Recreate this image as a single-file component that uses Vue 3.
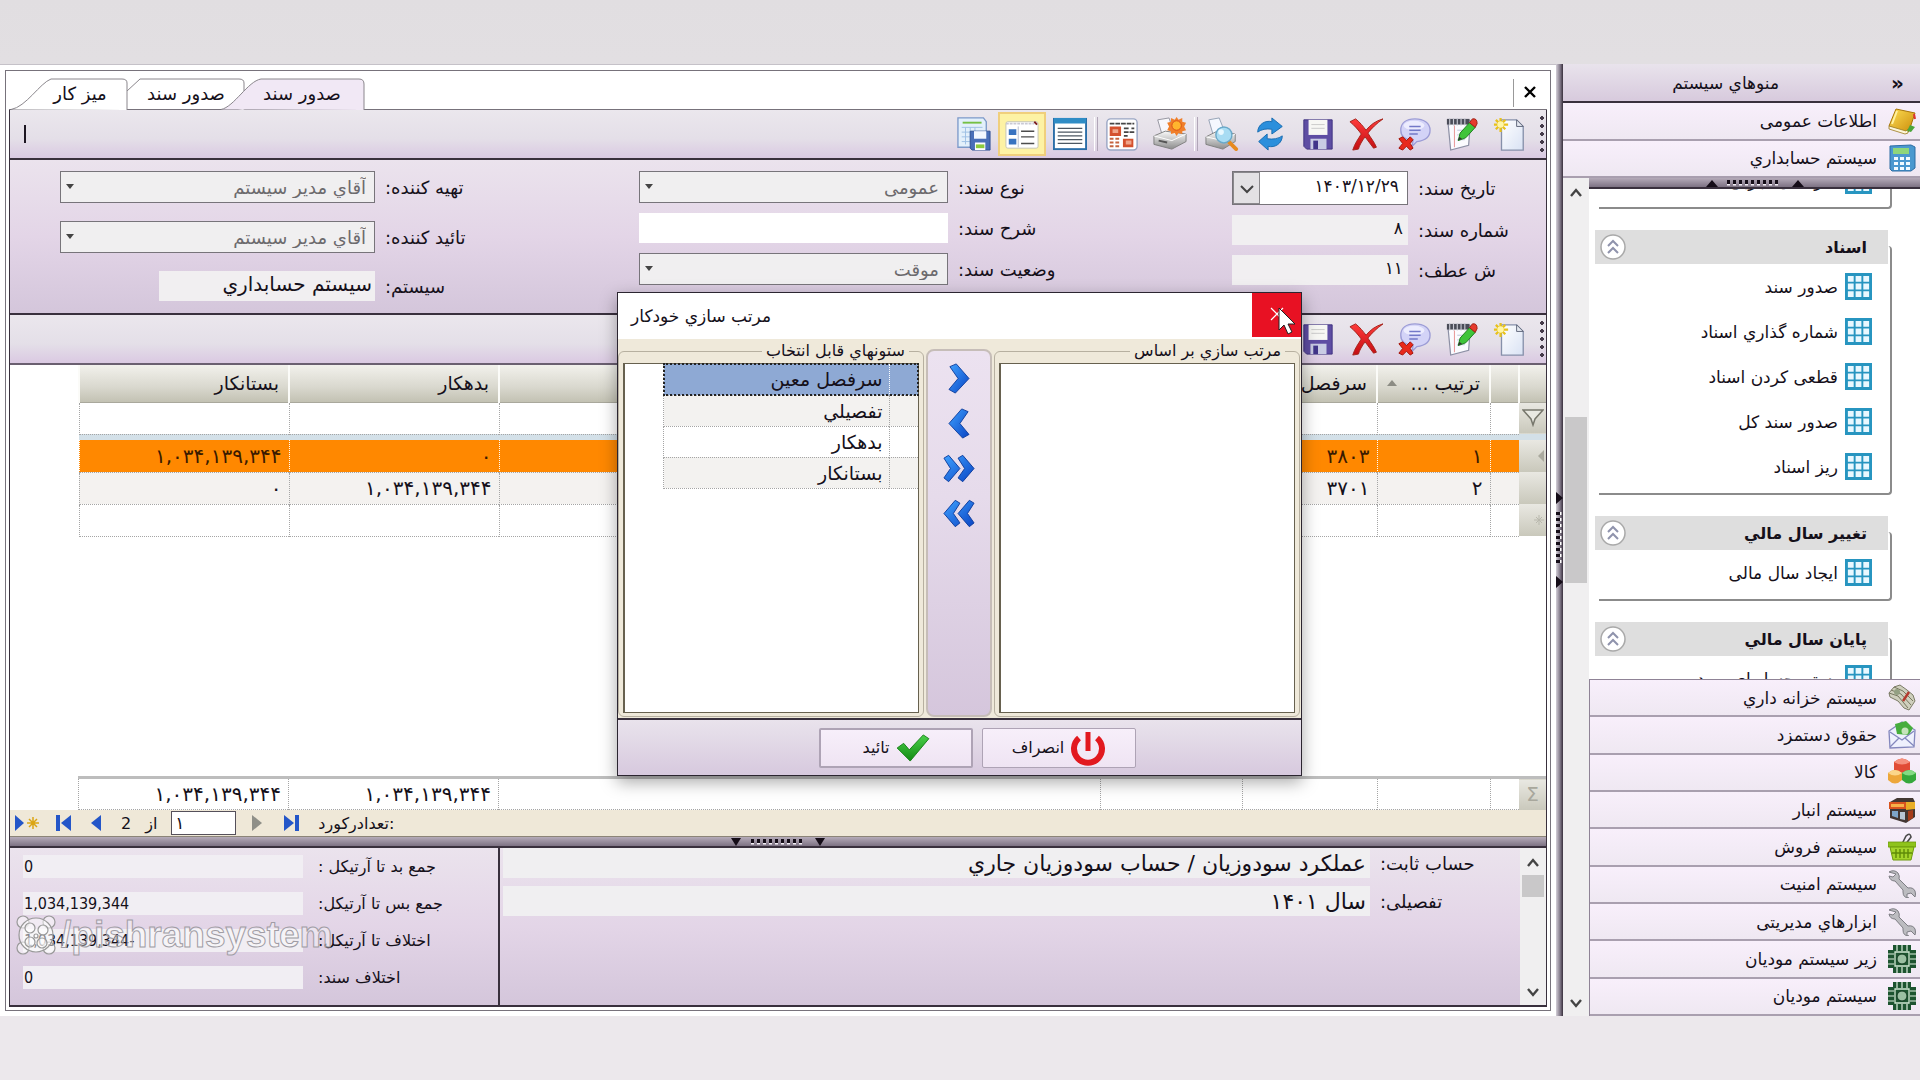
<template>
  <div class="page">
    <svg class="sprite" aria-hidden="true">
      <defs>
        <linearGradient id="g-blue" x1="0" y1="0" x2="1" y2="1">
          <stop offset="0" stop-color="#3fa2ff" />
          <stop offset="1" stop-color="#0a44c4" />
        </linearGradient>
        <linearGradient id="g-paper" x1="0" y1="0" x2="1" y2="1">
          <stop offset="0" stop-color="#ffffff" />
          <stop offset="1" stop-color="#d9e2f4" />
        </linearGradient>
        <linearGradient id="g-gold" x1="0" y1="0" x2="1" y2="1">
          <stop offset="0" stop-color="#ffdf55" />
          <stop offset="1" stop-color="#c98a08" />
        </linearGradient>
        <linearGradient id="g-metal" x1="0" y1="0" x2="0" y2="1">
          <stop offset="0" stop-color="#fafafa" />
          <stop offset="1" stop-color="#8c8c8c" />
        </linearGradient>
        <linearGradient id="g-red" x1="0" y1="0" x2="0" y2="1">
          <stop offset="0" stop-color="#ff3b3b" />
          <stop offset="1" stop-color="#c40d12" />
        </linearGradient>
        <linearGradient id="g-green" x1="0" y1="0" x2="0" y2="1">
          <stop offset="0" stop-color="#4bd04b" />
          <stop offset="1" stop-color="#128a12" />
        </linearGradient>
      </defs>

      <symbol id="i-new" viewBox="0 0 36 36">
        <path d="M9 3h16l7 7v25H9z" fill="url(#g-paper)" stroke="#8690aa" stroke-width="1.4" />
        <path d="M25 3v7h7z" fill="#e6eaf2" stroke="#5d6478" />
        <path d="M8 1v15M1 8h15M3 3l10 10M13 3L3 13" stroke="#e8c11b" stroke-width="2.4" />
        <circle cx="8" cy="8" r="3.4" fill="#fff6a6" />
      </symbol>
      <symbol id="i-edit" viewBox="0 0 36 36">
        <path d="M3 4h24l-2 26-19 5z" fill="#fbfbff" stroke="#8d90a5" stroke-width="1.3" />
        <path d="M2 2h24v6H2z" fill="#4a4c58" />
        <path d="M5 1v8M9 1v8M13 1v8M17 1v8M21 1v8" stroke="#c9cad4" stroke-width="1.2" />
        <path d="M10 9v23" stroke="#e58f8f" />
        <path d="M13 14h10M13 19h8M13 24h8" stroke="#b9bfd6" />
        <path d="M14 25l2-8 10-11 6 5-10 11z" fill="#3fc43a" stroke="#1c7c1c" />
        <path d="M26 6l3-4q5-1 5 5l-2 4z" fill="#e63a2c" stroke="#9b1d12" />
        <path d="M14 25l1-4 3 2z" fill="#333" />
      </symbol>
      <symbol id="i-comment" viewBox="0 0 36 36">
        <path d="M19 2c9 0 16 4 16 12 0 7-6 11-14 12l-5 5 1-6C8 24 4 20 4 14 4 6 10 2 19 2z" fill="#d3d3f7" stroke="#9c9cd6" stroke-width="1.4" />
        <ellipse cx="18" cy="9" rx="11" ry="5" fill="#f2f2ff" opacity=".8" />
        <path d="M13 10h12M13 14h12M13 18h9" stroke="#7378c8" stroke-width="1.6" />
        <path d="M2 23l4-2 4 4 4-4 3 3-3 4 3 5-3 2-4-4-4 4-4-2 4-5z" fill="#e8291c" stroke="#a11208" />
      </symbol>
      <symbol id="i-delete" viewBox="0 0 36 36">
        <path d="M1 5l6-3c5 4 8 8 11 12C22 9 28 4 36 2c-7 5-12 10-16 15 3 5 7 10 9 15l-3 1c-3-4-6-8-9-12-3 4-6 9-7 13l-6 1c2-7 6-12 9-17C10 14 6 9 1 5z" fill="url(#g-red)" stroke="#a3231b" />
      </symbol>
      <symbol id="i-save" viewBox="0 0 36 36">
        <path d="M3 3h30v31H6l-3-3z" fill="#5e4da3" stroke="#3f3180" />
        <path d="M8 3h20v16H8z" fill="#f7f7f4" />
        <path d="M11 8h14M11 12h14" stroke="#c9c9c9" />
        <path d="M10 23h17v11H10z" fill="#c9cce4" />
        <path d="M13 25h5v9h-5z" fill="#41368a" />
      </symbol>
      <symbol id="i-refresh" viewBox="0 0 36 36">
        <path d="M5 16C5 8 13 3 20 5V1l11 9-11 8v-5c-6-1-11 0-15 3z" fill="#2b8fdc" stroke="#176bb0" />
        <path d="M31 20c0 8-8 13-15 11v4L6 26l9-8v5c6 1 12 0 16-3z" fill="#2b8fdc" stroke="#176bb0" />
      </symbol>
      <symbol id="i-preview" viewBox="0 0 36 36">
        <path d="M4 3l11-2 6 15-12 4z" fill="#f4f8ff" stroke="#94a0b4" />
        <path d="M1 21l12-6 19 3v8l-13 8-18-5z" fill="url(#g-metal)" stroke="#808080" />
        <path d="M1 21l18 4 13-7" fill="none" stroke="#fff" />
        <path d="M25 26l8 8" stroke="#e78a1e" stroke-width="4" stroke-linecap="round" />
        <circle cx="20" cy="19" r="8.500" fill="#a8dcf3" stroke="#6aa9c9" stroke-width="1.5" />
        <circle cx="17" cy="16" r="3" fill="#e8f8ff" />
      </symbol>
      <symbol id="i-printer" viewBox="0 0 36 36">
        <path d="M5 3l12-2 5 15-12 4z" fill="#f8f8fc" stroke="#94949e" />
        <path d="M1 20l12-5 22 3v8l-15 8-19-5z" fill="url(#g-metal)" stroke="#7e7e7e" />
        <path d="M1 20l19 5 15-7" fill="none" stroke="#fff" />
        <path d="M6 25l9 2" stroke="#555" stroke-width="2" />
        <path d="M25 0l2 3 4-2v4l4 1-2 4 2 4-4 1v3l-4-1-2 3-2-3-4 1v-3l-4-1 2-4-2-4 4-1V1l4 2z" fill="#f07f2a" />
        <circle cx="25" cy="9" r="5" fill="#ffb52e" stroke="#d94e17" />
      </symbol>
      <symbol id="i-news" viewBox="0 0 36 36">
        <rect x="2" y="2" width="32" height="33" rx="4" fill="#fff" stroke="#9aa6c4" stroke-width="1.5" />
        <path d="M5 7h26M20 12h5M28 12h3M20 16h11M20 20h4" stroke="#454545" stroke-width="2" stroke-dasharray="5 1" />
        <path d="M5 10h12v10H5zM19 23h11v9H19z" fill="#d4512e" />
        <path d="M8 13h6v4H8zM22 25h6v4h-6z" fill="#efa58a" />
        <path d="M5 23h11M5 27h12M5 31h11" stroke="#c5633f" stroke-width="2" stroke-dasharray="4 2" />
      </symbol>
      <symbol id="i-list" viewBox="0 0 36 36">
        <rect x="1" y="2" width="34" height="32" fill="#fff" stroke="#2b6ea8" stroke-width="2" />
        <path d="M1 1h34v6H1z" fill="#2f8cc5" />
        <path d="M5 12h26M5 16h26M5 20h26M5 24h26M5 28h26" stroke="#4c5762" stroke-width="1.4" />
      </symbol>
      <symbol id="i-card" viewBox="0 0 36 36">
        <rect x="1" y="5" width="34" height="28" rx="2" fill="#fff" stroke="#c4c4b4" />
        <path d="M1 7h30" stroke="#c9c9d4" stroke-width="2" stroke-dasharray="3 1" />
        <path d="M31 5l3 3" stroke="#7d1f1f" stroke-width="2" />
        <path d="M4 13h8v6H4zM4 23h8v6H4z" fill="#3873c0" />
        <path d="M14 10v22" stroke="#b6bccb" />
        <path d="M17 15h14M17 21h14M17 28h14" stroke="#4d4d4d" stroke-width="1.500" />
      </symbol>
      <symbol id="i-savelist" viewBox="0 0 36 36">
        <path d="M1 1h27l3 4v27H1z" fill="#e3f0fb" stroke="#7c99c9" stroke-width="1.400" />
        <path d="M6 6h20" stroke="#75c044" stroke-width="2" />
        <path d="M5 11h22M5 16h22M5 21h22M5 26h22M9 11v18M14 11v18M19 11v18" stroke="#9dbfe4" />
        <path d="M14 15h21v20H16l-2-2z" fill="#4a6fb8" stroke="#2e4f93" />
        <path d="M18 15h13v8H18z" fill="#f3f7ff" />
        <path d="M19 27h11v8H19z" fill="#fff" />
        <path d="M20 29h9v4h-9z" fill="#8ccb3e" />
      </symbol>

      <symbol id="i-grid" viewBox="0 0 28 28">
        <path d="M0 0h28v28H0z" fill="#2795c0" />
        <path d="M3 3h6v6H3zM11 3h6v6h-6zM19 3h6v6h-6zM3 11h6v6H3zM11 11h6v6h-6zM19 11h6v6h-6zM3 19h6v6H3zM11 19h6v6h-6zM19 19h6v6h-6z" fill="#e9f8ff" />
      </symbol>
      <symbol id="i-book" viewBox="0 0 28 28">
        <path d="M8 2l19 4-6 18-3 2L1 19z" fill="url(#g-gold)" stroke="#a87508" />
        <path d="M1 19l17 5 2-2v4l-3 1L1 22z" fill="#fdf6d8" stroke="#9a7a1e" stroke-width=".8" />
        <path d="M22 18l5 2-4 5-4-1z" fill="#4ba63a" />
        <path d="M9 4L4 17" stroke="#fff1a0" stroke-width="2" />
        <path d="M26 7l1 5" stroke="#d33" stroke-width="2" />
      </symbol>
      <symbol id="i-calc" viewBox="0 0 28 28">
        <path d="M2 2l21-1 4 2v21l-4 3H4l-2-2z" fill="#4b98cf" stroke="#2d6da3" />
        <path d="M5 4h16v6H5z" fill="#8fd67a" />
        <path d="M6 13h4v3H6zM12 13h4v3h-4zM18 13h4v3h-4zM6 18h4v3H6zM12 18h4v3h-4zM18 18h4v3h-4zM6 23h4v3H6zM12 23h4v3h-4zM18 23h4v3h-4z" fill="#f3fbff" />
      </symbol>
      <symbol id="i-money" viewBox="0 0 28 28">
        <path d="M1 9l5-6 6-2 7 5 6 5 2 6-6 9-5-2-6-7-8-4z" fill="#cfcfbd" stroke="#7b7b66" />
        <path d="M1 9l9 3 10 12M3 6l10 4 10 11M6 3l9 4 10 10" fill="none" stroke="#77775f" />
        <circle cx="9" cy="8" r="3" fill="#93a082" />
        <path d="M21 8l-6 9" stroke="#b43a2e" stroke-width="2.500" />
      </symbol>
      <symbol id="i-mail" viewBox="0 0 28 28">
        <path d="M1 10L14 1l13 8-1 17-24 1z" fill="#eef0fd" stroke="#8387bd" stroke-width="1.300" />
        <path d="M7 3l11-3 7 7-4 7-12-1z" fill="#46ad3d" />
        <circle cx="17" cy="10" r="3.500" fill="#c5e3bb" />
        <path d="M2 11l12 8 12-9M2 26l9-9M26 25l-9-8" fill="none" stroke="#8387bd" stroke-width="1.300" />
      </symbol>
      <symbol id="i-cubes" viewBox="0 0 28 28">
        <path d="M6 4q8-7 16 0v8q-8 6-16 0z" fill="#e14b35" />
        <path d="M6 4q8-7 16 0-8 5-16 0z" fill="#f5917e" />
        <path d="M0 15q7-6 14 0v7q-7 7-14 0z" fill="#eda73a" />
        <path d="M0 15q7-6 14 0-7 5-14 0z" fill="#fbd68b" />
        <path d="M14 15q7-6 14 0v7q-7 7-14 0z" fill="#35a83b" />
        <path d="M14 15q7-6 14 0-7 5-14 0z" fill="#84da83" />
      </symbol>
      <symbol id="i-store" viewBox="0 0 28 28">
        <path d="M2 6l7-4h16l2 4v15l-9 6L2 22z" fill="#433733" />
        <path d="M1 6h17v7H1z" fill="#d9541f" />
        <path d="M18 6h9v7l-9 1z" fill="#e9ad26" />
        <path d="M3 8h13v3H3z" fill="#f7b14a" />
        <path d="M4 15h6v7l-6-2z" fill="#7da5c9" />
        <path d="M12 16h5v8l-5-1z" fill="#b8c5d4" />
        <path d="M20 15l5-1v8l-5 3z" fill="#a63c1a" />
      </symbol>
      <symbol id="i-basket" viewBox="0 0 28 28">
        <path d="M14 11l4-8q4-4 5 1l-6 8" fill="none" stroke="#4b4b4b" stroke-width="1.600" />
        <path d="M0 9h28v5H0z" fill="#8fc31c" stroke="#6c9a0c" stroke-width=".8" />
        <path d="M2 14h24l-3 13H5z" fill="#a4d42b" stroke="#6c9a0c" />
        <path d="M8 16v9M12 16v9M16 16v9M20 16v9M4 20h20" stroke="#5f8a08" stroke-width="1.400" />
      </symbol>
      <symbol id="i-wrench" viewBox="0 0 28 28">
        <path d="M1 2q5-3 9 1 2 3 1 6l9 9q5-1 7 3 1 3 0 6l-4-4-4 1v4l2 0q-6 0-6-6l0-2-8-9q-5 0-6-5l4 1 3-3z" fill="#bcbcc0" stroke="#7e7e84" />
      </symbol>
      <symbol id="i-tax" viewBox="0 0 28 28">
        <path d="M5 0h18v5h5v18h-5v5H5v-5H0V5h5z" fill="#1d5430" />
        <path d="M9 0v6M14 0v6M19 0v6M9 22v6M14 22v6M19 22v6M0 9h6M0 14h6M0 19h6M22 9h6M22 14h6M22 19h6" stroke="#dff0e0" stroke-width="1.200" />
        <path d="M7 7h14v14H7z" fill="none" stroke="#cfe6d2" stroke-width="1.300" />
        <circle cx="14" cy="14" r="5" fill="#9bbfa2" stroke="#123a20" />
      </symbol>

      <symbol id="i-right" viewBox="0 0 26 34">
        <path d="M3 4l7-3 14 16L9 33l-7-4 10-12z" fill="url(#g-blue)" stroke="#0d3c9c" />
      </symbol>
      <symbol id="i-left" viewBox="0 0 26 34">
        <path d="M23 4l-7-3L2 17l15 16 7-4-10-12z" fill="url(#g-blue)" stroke="#0d3c9c" />
      </symbol>
      <symbol id="i-right2" viewBox="0 0 34 30">
        <path d="M1 4l5-3 12 14L6 29l-5-4 7-10zM16 4l5-3 12 14-12 14-5-4 7-10z" fill="url(#g-blue)" stroke="#0d3c9c" />
      </symbol>
      <symbol id="i-left2" viewBox="0 0 34 30">
        <path d="M33 4l-5-3-12 14 12 14 5-4-7-10zM18 4l-5-3L1 15l12 14 5-4-7-10z" fill="url(#g-blue)" stroke="#0d3c9c" />
      </symbol>
      <symbol id="i-power" viewBox="0 0 36 36">
        <path d="M9 8a14 14 0 1 0 18 0" fill="none" stroke="#e2191f" stroke-width="6" />
        <path d="M18 2v19" stroke="#e2191f" stroke-width="5" />
      </symbol>
      <symbol id="i-check" viewBox="0 0 36 30">
        <path d="M1 15l7-5 6 7L29 1l6 4L15 29z" fill="url(#g-green)" stroke="#178017" />
      </symbol>
    </svg>

    <div class="app">
      <main class="workspace">
        <div class="frame">
          <nav class="tabs">
            <svg class="tab-lines" width="370" height="39" viewBox="0 0 370 39" aria-hidden="true">
              <path d="M2 38.500C17 36 31 12 42 8h71q5 0 5 4v27" fill="#fff" stroke="#8a868c" />
              <path d="M118 20L131 8h99q5 0 5 4v27" fill="#fff" stroke="#8a868c" />
              <path d="M212 38.500C225 36 239 10 252 8h98q5 0 5 5v26" fill="#f1e8f5" stroke="#8a868c" />
            </svg>
            <button v-for="tab in tabs" :key="tab.id" class="tab" :class="tab.id">{{ tab.title }}</button>
            <button class="tab-close" aria-label="بستن">
              <svg width="14" height="14" viewBox="0 0 14 14"><path d="M2 2l10 10M12 2L2 12" stroke="#000" stroke-width="2.400" /></svg>
            </button>
          </nav>

          <div class="content">
            <div class="toolbar">
              <span class="grip"></span>
              <template v-for="(name, i) in mainTools" :key="i">
                <span v-if="name === '|'" class="tool-sep"></span>
                <button v-else class="tool" :class="{ active: name === 'card' }" :aria-label="name">
                  <svg width="34" height="34"><use :href="'#i-' + name" /></svg>
                </button>
              </template>
              <span class="tool-caret"></span>
            </div>

            <form class="voucher" @submit.prevent>
              <div class="fields fields-a">
                <div class="field">
                  <span class="combo">
                    <select id="maker" disabled><option>آقاي مدیر سیستم</option></select>
                    <svg class="combo-arrow" width="8" height="5"><path d="M0 0h8L4 5z" fill="#444" /></svg>
                  </span>
                  <label for="maker">تهیه کننده:</label>
                </div>
                <div class="field">
                  <span class="combo">
                    <select id="approver" disabled><option>آقاي مدیر سیستم</option></select>
                    <svg class="combo-arrow" width="8" height="5"><path d="M0 0h8L4 5z" fill="#444" /></svg>
                  </span>
                  <label for="approver">تائید کننده:</label>
                </div>
                <div class="field">
                  <input id="system" class="plain short" value="سیستم حسابداري" readonly />
                  <label for="system">سیستم:</label>
                </div>
              </div>
              <div class="fields fields-b">
                <div class="field">
                  <span class="combo">
                    <select id="kind" disabled><option>عمومی</option></select>
                    <svg class="combo-arrow" width="8" height="5"><path d="M0 0h8L4 5z" fill="#444" /></svg>
                  </span>
                  <label for="kind">نوع سند:</label>
                </div>
                <div class="field">
                  <input id="desc" class="plain editable" value="" />
                  <label for="desc">شرح سند:</label>
                </div>
                <div class="field">
                  <span class="combo">
                    <select id="state" disabled><option>موقت</option></select>
                    <svg class="combo-arrow" width="8" height="5"><path d="M0 0h8L4 5z" fill="#444" /></svg>
                  </span>
                  <label for="state">وضعیت سند:</label>
                </div>
              </div>
              <div class="fields fields-c">
                <div class="field">
                  <span class="date">
                    <button type="button" class="date-drop" aria-label="تقویم">
                      <svg width="14" height="9" viewBox="0 0 14 9"><path d="M1 1l6 6 6-6" fill="none" stroke="#444" stroke-width="2" /></svg>
                    </button>
                    <input id="date" value="۱۴۰۳/۱۲/۲۹" />
                  </span>
                  <label for="date">تاریخ سند:</label>
                </div>
                <div class="field">
                  <input id="number" class="plain" value="۸" readonly />
                  <label for="number">شماره سند:</label>
                </div>
                <div class="field">
                  <input id="ref" class="plain" value="۱۱" readonly />
                  <label for="ref">ش عطف:</label>
                </div>
              </div>
            </form>

            <div class="toolbar">
              <span class="grip"></span>
              <button v-for="name in rowTools" :key="name" class="tool" :aria-label="name">
                <svg width="34" height="34"><use :href="'#i-' + name" /></svg>
              </button>
            </div>

            <div class="grid">
              <table class="articles">
                <colgroup>
                  <col v-for="(w, i) in colWidths" :key="i" :class="'w' + w" />
                </colgroup>
                <thead>
                  <tr>
                    <th></th>
                    <th></th>
                    <th><span class="sorted">ترتیب ...<svg width="10" height="6"><path d="M0 6h10L5 0z" fill="#8c8c84" /></svg></span></th>
                    <th>سرفصل</th>
                    <th></th>
                    <th></th>
                    <th>بدهکار</th>
                    <th>بستانکار</th>
                  </tr>
                </thead>
                <tbody>
                  <tr class="filter">
                    <td class="handle"><svg width="22" height="18" viewBox="0 0 22 18"><path d="M1 1h20l-8 9-2 6-2-6z" fill="#e9e9e2" stroke="#77776c" stroke-width="1.500" /></svg></td>
                    <td v-for="n in 7" :key="n"></td>
                  </tr>
                  <tr class="band"><td colspan="8"></td></tr>
                  <tr v-for="row in articles" :key="row.order" :class="row.order === '۱' ? 'current' : 'alt'">
                    <td class="handle"><svg v-if="row.order === '۱'" width="6" height="12"><path d="M6 0v12L0 6z" fill="#aaa99e" /></svg></td>
                    <td></td>
                    <td>{{ row.order }}</td>
                    <td>{{ row.code }}</td>
                    <td></td>
                    <td></td>
                    <td>{{ row.debit }}</td>
                    <td>{{ row.credit }}</td>
                  </tr>
                  <tr>
                    <td class="handle">
                      <svg width="10" height="10"><path d="M5 0v10M0 5h10M2 2l6 6M8 2L2 8" stroke="#b9b8ad" /></svg>
                    </td>
                    <td v-for="n in 7" :key="n"></td>
                  </tr>
                </tbody>
              </table>

              <table class="articles totals">
                <colgroup>
                  <col v-for="(w, i) in colWidths" :key="i" :class="'w' + w" />
                </colgroup>
                <tbody>
                  <tr>
                    <td class="handle sigma">Σ</td>
                    <td></td>
                    <td></td>
                    <td></td>
                    <td></td>
                    <td></td>
                    <td>۱,۰۳۴,۱۳۹,۳۴۴</td>
                    <td>۱,۰۳۴,۱۳۹,۳۴۴</td>
                  </tr>
                </tbody>
              </table>
            </div>

            <div class="navigator">
              <button aria-label="رکورد جدید">
                <svg width="24" height="16"><path d="M0 0v16l9-8z" fill="#2456c8" /><path d="M18 2v12M12 8h12M14 4l8 8M22 4l-8 8" stroke="#dba514" stroke-width="1.500" /></svg>
              </button>
              <button aria-label="اولین">
                <svg width="16" height="16"><path d="M1 0h4v16H1zM16 0v16L6 8z" fill="#2456c8" /></svg>
              </button>
              <button aria-label="قبلی">
                <svg width="10" height="16"><path d="M10 0v16L0 8z" fill="#2456c8" /></svg>
              </button>
              <span>2</span>
              <label for="record">از</label>
              <input id="record" value="۱" />
              <button aria-label="بعدی">
                <svg width="10" height="16"><path d="M0 0v16l10-8z" fill="#8f8f88" /></svg>
              </button>
              <button aria-label="آخرین">
                <svg width="16" height="16"><path d="M11 0h4v16h-4zM0 0v16l10-8z" fill="#2456c8" /></svg>
              </button>
              <span class="count">تعدادرکورد:</span>
            </div>

            <div class="splitter">
              <svg width="94" height="10" viewBox="0 0 94 10">
                <path d="M0 1h10L5 9zM84 1h10l-5 8z" fill="#150d18" />
                <path d="M20 5h54" stroke="#f4eff6" stroke-width="5" stroke-dasharray="3 3" />
                <path d="M20 4h54" stroke="#150d18" stroke-width="4" stroke-dasharray="3 3" />
              </svg>
            </div>

            <section class="details">
              <div class="sums">
                <div v-for="sum in sums" :key="sum.id" class="sum">
                  <input :id="sum.id" :value="sum.value" readonly />
                  <label :for="sum.id">{{ sum.label }}</label>
                </div>
              </div>
              <div class="account">
                <div class="account-row">
                  <input id="fixed" value="عملکرد سودوزیان / حساب سودوزیان جاري" readonly />
                  <label for="fixed">حساب ثابت:</label>
                </div>
                <div class="account-row">
                  <input id="detail" value="سال ۱۴۰۱" readonly />
                  <label for="detail">تفصیلی:</label>
                </div>
              </div>
              <div class="scrollbar">
                <svg width="14" height="9" viewBox="0 0 14 9"><path d="M2 8l5-6 5 6" fill="none" stroke="#444" stroke-width="2.400" /></svg>
                <span class="thumb small"></span>
                <svg class="down" width="14" height="9" viewBox="0 0 14 9"><path d="M2 1l5 6 5-6" fill="none" stroke="#444" stroke-width="2.400" /></svg>
              </div>
            </section>
          </div>
        </div>
      </main>

      <div class="side-splitter">
        <svg width="7" height="96" viewBox="0 0 7 96">
          <path d="M0 0v12l7-6zM0 84v12l7-6z" fill="#150d18" />
          <path d="M3 20v54" stroke="#fff" stroke-width="5" stroke-dasharray="3 3" />
          <path d="M2 20v54" stroke="#150d18" stroke-width="4" stroke-dasharray="3 3" />
        </svg>
      </div>

      <aside class="sidebar">
        <header class="side-title">
          <button aria-label="بستن منو">»</button>
          <span>منوهاي سیستم</span>
        </header>
        <div class="modules top">
          <button v-for="m in topModules" :key="m.title" class="module">
            <svg width="28" height="28"><use :href="'#i-' + m.icon" /></svg>{{ m.title }}
          </button>
        </div>
        <div class="side-body">
          <div class="scrollbar">
            <svg width="14" height="9" viewBox="0 0 14 9"><path d="M2 8l5-6 5 6" fill="none" stroke="#444" stroke-width="2.400" /></svg>
            <span class="thumb"></span>
            <svg class="down" width="14" height="9" viewBox="0 0 14 9"><path d="M2 1l5 6 5-6" fill="none" stroke="#444" stroke-width="2.400" /></svg>
          </div>
          <div class="side-main">
            <div class="splitter side">
              <svg width="98" height="10" viewBox="0 0 98 10">
                <path d="M0 9h12L6 2zM86 9h12l-6-7z" fill="#150d18" />
                <path d="M21 5h54" stroke="#f4eff6" stroke-width="5" stroke-dasharray="3 3" />
                <path d="M21 4h54" stroke="#150d18" stroke-width="4" stroke-dasharray="3 3" />
              </svg>
            </div>
            <div class="groups">
              <section v-for="(group, i) in groups" :key="i" class="group">
                <h2 v-if="group.title">
                  {{ group.title }}
                  <svg width="26" height="26" viewBox="0 0 26 26">
                    <circle cx="13" cy="13" r="12" fill="#fff" stroke="#a9a9a9" stroke-width="1.500" />
                    <path d="M8 12l5-5 5 5M8 19l5-5 5 5" fill="none" stroke="#8f93ac" stroke-width="2" />
                  </svg>
                </h2>
                <a v-for="item in group.items" :key="item" href="#" class="item">
                  <svg width="27" height="27"><use href="#i-grid" /></svg>{{ item }}
                </a>
              </section>
            </div>
            <div class="modules bottom">
              <button v-for="m in modules" :key="m.title" class="module">
                <svg width="28" height="28"><use :href="'#i-' + m.icon" /></svg>{{ m.title }}
              </button>
            </div>
          </div>
        </div>
      </aside>
    </div>

    <div class="dialog" role="dialog" aria-labelledby="dialog-title">
      <header class="dialog-bar">
        <span id="dialog-title">مرتب سازي خودکار</span>
        <button class="dialog-close" aria-label="بستن">
          <svg width="14" height="14" viewBox="0 0 14 14"><path d="M1 1l12 12M13 1L1 13" stroke="#fff" stroke-width="1.200" /></svg>
        </button>
      </header>
      <div class="dialog-body">
        <fieldset>
          <legend>ستونهاي قابل انتخاب</legend>
          <div class="list">
            <table class="columns">
              <tbody>
                <tr v-for="(col, i) in columns" :key="col" :class="{ selected: i === 0 }">
                  <td class="mark"></td>
                  <td>{{ col }}</td>
                </tr>
              </tbody>
            </table>
          </div>
        </fieldset>
        <div class="movers">
          <button v-for="name in ['right', 'left', 'right2', 'left2']" :key="name" :aria-label="name">
            <svg width="32" height="31"><use :href="'#i-' + name" /></svg>
          </button>
        </div>
        <fieldset>
          <legend>مرتب سازي بر اساس</legend>
          <div class="list"></div>
        </fieldset>
      </div>
      <footer class="dialog-foot">
        <button class="ok">تائید<svg width="34" height="28"><use href="#i-check" /></svg></button>
        <button>انصراف<svg width="36" height="36"><use href="#i-power" /></svg></button>
      </footer>
    </div>

    <svg class="pointer" width="18" height="28" viewBox="0 0 18 28" aria-hidden="true">
      <path d="M1 1v22l5-5 4 9 4-2-4-8h7z" fill="#fff" stroke="#222" />
    </svg>

    <div class="watermark">
      <svg width="42" height="42" viewBox="0 0 42 42">
        <g fill="#fff" fill-opacity=".5" stroke="#999" stroke-width="1.200">
          <circle cx="8" cy="8" r="6" /><circle cx="34" cy="8" r="6" />
          <circle cx="8" cy="34" r="6" /><circle cx="34" cy="34" r="6" />
          <circle cx="21" cy="21" r="17" />
          <circle cx="15" cy="14" r="5" /><circle cx="28" cy="16" r="5" />
          <circle cx="15" cy="28" r="5" /><circle cx="27" cy="29" r="5" />
          <circle cx="21" cy="22" r="2" />
        </g>
      </svg>
      <span>/pishransystem</span>
    </div>
  </div>
</template>

<script setup>
const tabs = [
  { id: "desk", title: "میز کار" },
  { id: "second", title: "صدور سند" },
  { id: "open", title: "صدور سند" },
];

const mainTools = [
  "new", "edit", "comment", "delete", "save", "refresh", "preview",
  "|", "printer", "news", "|", "list", "card", "savelist",
];
const rowTools = ["new", "edit", "comment", "delete", "save"];

const colWidths = [27, 29, 113, 135, 142, 0, 210, 210];
const articles = [
  { order: "۱", code: "۳۸۰۳", debit: "۰", credit: "۱,۰۳۴,۱۳۹,۳۴۴" },
  { order: "۲", code: "۳۷۰۱", debit: "۱,۰۳۴,۱۳۹,۳۴۴", credit: "۰" },
];

const sums = [
  { id: "sum-debit", label: "جمع بد تا آرتیکل :", value: "0" },
  { id: "sum-credit", label: "جمع بس تا آرتیکل:", value: "1,034,139,344" },
  { id: "diff-article", label: "اختلاف تا آرتیکل:", value: "1,034,139,344-" },
  { id: "diff-voucher", label: "اختلاف سند:", value: "0" },
];

const columns = ["سرفصل معین", "تفصیلي", "بدهکار", "بستانکار"];

const topModules = [
  { icon: "book", title: "اطلاعات عمومی" },
  { icon: "calc", title: "سیستم حسابداري" },
];
const modules = [
  { icon: "money", title: "سیستم خزانه داري" },
  { icon: "mail", title: "حقوق دستمزد" },
  { icon: "cubes", title: "کالا" },
  { icon: "store", title: "سیستم انبار" },
  { icon: "basket", title: "سیستم فروش" },
  { icon: "wrench", title: "سیستم امنیت" },
  { icon: "wrench", title: "ابزارهاي مدیریتی" },
  { icon: "tax", title: "زیر سیستم مودیان" },
  { icon: "tax", title: "سیستم مودیان" },
];
const groups = [
  { title: "", items: ["سرفصل تجربی"] },
  {
    title: "اسناد",
    items: ["صدور سند", "شماره گذاري اسناد", "قطعی کردن اسناد", "صدور سند کل", "ریز اسناد"],
  },
  { title: "تغییر سال مالي", items: ["ایجاد سال مالی"] },
  { title: "پایان سال مالي", items: ["بستن حسابهاي سود"] },
];
</script>

<style>
body {
  margin: 0;
}
</style>

<style scoped>
* {
  box-sizing: border-box;
}
.page {
  position: relative;
  display: flex;
  min-height: 100vh;
  padding: 64px 0;
  background: linear-gradient(#e1dee1, #ece8ec 60%);
  font-family: "DejaVu Sans", sans-serif;
  font-size: 17px;
  color: #15101a;
}
button,
input,
select {
  font: inherit;
  color: inherit;
}
button {
  padding: 0;
  border: 0;
  background: none;
}
.sprite {
  position: absolute;
  width: 0;
  height: 0;
}
.app {
  display: flex;
  flex: 1;
  min-width: 0;
  background: #fff;
}

/* workspace */
.workspace {
  display: flex;
  flex: 1;
  min-width: 0;
  padding: 5px;
  border-top: 1px solid #c5c1c8;
}
.frame {
  display: flex;
  flex: 1;
  flex-direction: column;
  min-width: 0;
  padding: 0 3px 3px;
  border: 1px solid #77727b;
}
.tabs {
  position: relative;
  display: flex;
  align-items: center;
  height: 39px;
  padding: 6px 6px 0 0;
  border-bottom: 1px solid #77727b;
}
.tab-lines {
  position: absolute;
  left: 0;
  top: 0;
}
.tab {
  position: relative;
  direction: rtl;
  font-size: 18px;
}
.tab.desk {
  width: 108px;
  padding-left: 34px;
}
.tab.second {
  width: 128px;
  padding-left: 10px;
}
.tab.open {
  width: 114px;
}
.tab-close {
  height: 28px;
  margin-left: auto;
  padding: 0 4px 0 9px;
  border-left: 1px solid #999;
}
.content {
  display: flex;
  flex: 1;
  flex-direction: column;
  min-width: 0;
  border-left: 1px solid #39303d;
  border-right: 1px solid #39303d;
}
.toolbar {
  display: flex;
  align-items: center;
  direction: rtl;
  height: 48px;
  padding-right: 2px;
  background: linear-gradient(#ebe7ed, #e4dfe8 60%, #dac9e2);
}
.grip {
  width: 4px;
  height: 40px;
  margin-left: 6px;
  background: radial-gradient(circle, #453b4a 2px, transparent 2px) 0 0 / 4px 8px;
}
.tool {
  display: flex;
  align-items: center;
  justify-content: center;
  width: 48px;
  height: 44px;
}
.tool.active {
  border: 2px solid #f0cf7c;
  background: #fdf2a4;
}
.tool-sep {
  width: 4px;
  height: 34px;
  border-left: 1px solid #fff;
  border-right: 1px solid #b1a6b8;
}
.tool-caret {
  width: 2px;
  height: 18px;
  margin: 0 auto 0 14px;
  background: #1d1622;
}

/* voucher form */
.voucher {
  display: grid;
  grid-template-columns: 579fr 593fr 314fr;
  min-height: 157px;
  padding: 11px 0 8px 50px;
  border-top: 2px solid #39303d;
  border-bottom: 2px solid #39303d;
  background: linear-gradient(#ebe3ed, #e3d5e7 50%, #d4c6db);
}
.fields {
  display: flex;
  flex-direction: column;
  gap: 10px;
}
.fields-a {
  gap: 18px;
}
.field {
  display: flex;
  align-items: center;
  gap: 10px;
}
.field label {
  direction: rtl;
  font-size: 18px;
  white-space: nowrap;
}
.combo {
  position: relative;
  width: 309px;
}
.fields-a .combo {
  width: 315px;
}
.combo select {
  display: block;
  width: 100%;
  height: 32px;
  padding: 0 8px;
  border: 1px solid #77747a;
  border-radius: 0;
  direction: rtl;
  appearance: none;
  background: #f0eff0;
  color: #6c6a6d;
  font-size: 18px;
  opacity: 1;
}
.combo-arrow {
  position: absolute;
  left: 6px;
  top: 13px;
}
.plain {
  width: 176px;
  height: 30px;
  padding: 0 5px 4px;
  border: 0;
  direction: rtl;
  background: #f1eff1;
}
.plain.editable {
  width: 309px;
  background: #fff;
}
.plain.short {
  width: 216px;
  margin-left: 99px;
  padding: 0 3px 4px;
  font-size: 20px;
}
.date {
  display: flex;
  width: 176px;
  height: 34px;
  border: 1px solid #77747a;
  background: #fff;
}
.date input {
  flex: 1;
  min-width: 0;
  padding: 0 8px 4px;
  border: 0;
  direction: rtl;
  background: none;
}
.date-drop {
  width: 27px;
  border: 1px solid #8a888c;
  background: #e3e1e4;
}

/* articles grid */
.grid {
  display: flex;
  flex: 1;
  flex-direction: column;
  justify-content: space-between;
  padding-left: 68px;
  border-top: 2px solid #6a5f70;
  background: #fff;
}
.articles {
  width: 100%;
  border-collapse: collapse;
  table-layout: fixed;
  direction: rtl;
  font-size: 20px;
}
.w27 {
  width: 27px;
}
.w29 {
  width: 29px;
}
.w113 {
  width: 113px;
}
.w135 {
  width: 135px;
}
.w142 {
  width: 142px;
}
.w210 {
  width: 210px;
}
.articles th {
  height: 37px;
  padding: 0 9px;
  border-left: 2px solid #fbfbf8;
  border-bottom: 1px solid #a9a89c;
  background: linear-gradient(#f2f1ec, #d9d8ce 60%, #c3c2b3);
  font-size: 19px;
  font-weight: normal;
  text-align: right;
  white-space: nowrap;
}
.sorted {
  display: flex;
  align-items: center;
  justify-content: space-between;
}
.articles td {
  height: 32px;
  padding: 0 7px;
  border-left: 1px dotted #a5a5a5;
  border-bottom: 1px dotted #a5a5a5;
  line-height: 24px;
  white-space: nowrap;
}
.articles .band td {
  height: 6px;
  padding: 0;
  border: 0;
  background: #d3e0e8;
}
.articles .handle {
  padding: 0 2px;
  border: 0;
  background: linear-gradient(#e9e8e2, #c9c8bb);
  line-height: 0;
}
.current td {
  border-left-color: #fff;
  background: #ff8800;
  color: #3a1a00;
}
.alt td {
  background: #f4f2f0;
}
.totals {
  border-top: 3px solid #bdbdbd;
}
.articles .sigma {
  color: #a8a79c;
  text-align: center;
}

.navigator {
  display: flex;
  align-items: center;
  height: 27px;
  padding-left: 5px;
  border-bottom: 1px solid #8c8578;
  background: #efe8d8;
}
.navigator button {
  line-height: 0;
  margin-right: 16px;
}
.navigator button:nth-of-type(2),
.navigator button:nth-of-type(3) {
  margin-right: 20px;
}
.navigator span,
.navigator label {
  margin-right: 14px;
  font-size: 16px;
}
.navigator input {
  width: 65px;
  height: 24px;
  margin-right: 16px;
  padding: 0 3px;
  border: 1px solid #55505a;
  background: #fff;
}
.navigator button:nth-of-type(4) {
  margin-right: 22px;
}
.navigator button:nth-of-type(5) {
  margin-right: 18px;
}
.splitter {
  display: flex;
  align-items: center;
  justify-content: center;
  height: 11px;
  border-bottom: 2px solid #39303d;
  background: linear-gradient(#b5abb9, #7d7283);
}

/* details */
.details {
  display: flex;
  height: 159px;
  border-bottom: 2px solid #39303d;
  background: linear-gradient(#ebe3ed, #e3d5e7 50%, #d4c6db);
}
.sums {
  display: flex;
  flex-direction: column;
  gap: 14px;
  width: 490px;
  padding: 7px 0 0 13px;
  border-right: 2px solid #39303d;
}
.sum {
  display: flex;
  align-items: center;
  gap: 15px;
}
.sum input {
  width: 280px;
  height: 23px;
  padding: 0 1px;
  border: 0;
  background: #f1eef3;
  font-family: "DejaVu Sans Condensed", "DejaVu Sans", sans-serif;
  font-size: 16px;
}
.sum label {
  direction: rtl;
  font-size: 16px;
}
.account {
  display: flex;
  flex: 1;
  flex-direction: column;
  gap: 8px;
}
.account-row {
  display: grid;
  grid-template-columns: 1fr 140px;
  align-items: center;
  gap: 10px;
  padding-left: 3px;
}
.account-row input {
  min-width: 0;
  height: 30px;
  padding: 0 4px;
  border: 0;
  direction: rtl;
  background: #f0eff1;
  font-size: 22px;
}
.account-row label {
  direction: rtl;
  justify-self: start;
  font-size: 18px;
}
.scrollbar {
  display: flex;
  flex-direction: column;
  align-items: center;
  width: 26px;
  padding: 10px 0 8px;
  background: #f0eff0;
}
.thumb {
  width: 22px;
  height: 166px;
  margin-top: 220px;
  background: #c9c8c9;
}
.thumb.small {
  height: 22px;
  margin-top: 8px;
}
.down {
  margin-top: auto;
}

/* sidebar */
.side-splitter {
  display: flex;
  align-items: center;
  width: 7px;
  background: linear-gradient(to right, #d4cfd8, #807787 60%, #39303d);
}
.sidebar {
  display: flex;
  flex-direction: column;
  width: 357px;
}
.side-title {
  display: flex;
  align-items: center;
  direction: rtl;
  height: 39px;
  padding: 0 16px;
  border-bottom: 2px solid #39303d;
  background: linear-gradient(#e9e3ec, #d7cadd);
}
.side-title button {
  direction: ltr;
  font-size: 20px;
  font-weight: bold;
}
.side-title span {
  margin-right: 112px;
}
.modules {
  display: grid;
  grid-auto-rows: 1fr;
}
.modules.top {
  height: 75px;
}
.modules.bottom {
  height: 337px;
  border-top: 1px solid #8f8396;
  border-left: 1px solid #8f8396;
}
.module {
  display: flex;
  align-items: center;
  gap: 11px;
  direction: rtl;
  padding: 0 4px;
  border-bottom: 2px solid #a99faf;
  background: linear-gradient(#f8effb, #efe8f2);
}
.side-body {
  display: flex;
  flex: 1;
  min-height: 0;
}
.side-main {
  display: flex;
  flex: 1;
  flex-direction: column;
}
.groups {
  flex: 1 1 0;
  min-height: 0;
  overflow: hidden;
  direction: rtl;
}
.group {
  position: relative;
  margin: 0 32px 21px 6px;
  padding-bottom: 6px;
}
.group:first-child {
  margin-top: -31px;
}
.group::after {
  content: "";
  position: absolute;
  top: 16px;
  right: -4px;
  bottom: 0;
  left: 4px;
  border-right: 2px solid #8b8b8b;
  border-bottom: 2px solid #8b8b8b;
  border-radius: 0 4px 4px 0;
  pointer-events: none;
}
.group h2 {
  display: flex;
  align-items: center;
  justify-content: space-between;
  height: 34px;
  margin: 0;
  padding: 0 21px 0 5px;
  background: #dedede;
  font-size: 16px;
}
.item {
  display: flex;
  align-items: center;
  gap: 7px;
  height: 45px;
  padding-right: 16px;
  color: inherit;
  text-decoration: none;
}

/* sort dialog */
.dialog {
  position: absolute;
  left: 617px;
  top: 292px;
  display: flex;
  flex-direction: column;
  width: 685px;
  height: 484px;
  border: 1px solid #2b2530;
  background: #efe9da;
  box-shadow: 0 6px 16px rgba(0, 0, 0, 0.35);
}
.dialog-bar {
  display: flex;
  align-items: center;
  justify-content: space-between;
  height: 46px;
  padding-left: 13px;
  background: #fff;
}
.dialog-close {
  align-self: flex-start;
  width: 49px;
  height: 44px;
  background: #e81123;
}
.dialog-body {
  display: flex;
  flex: 1;
  gap: 2px;
  min-height: 0;
  padding: 1px 1px 1px 0;
}
.dialog fieldset {
  display: flex;
  flex: 1;
  min-width: 0;
  margin: 0;
  padding: 1px 4px 3px;
  border: 1px solid #b7b0a0;
  border-radius: 6px;
  direction: rtl;
}
.dialog legend {
  margin-right: 10px;
  padding: 0 4px;
  line-height: 22px;
  font-size: 16px;
}
.list {
  flex: 1;
  border: 1px solid #67614f;
  border-left-width: 2px;
  background: #fff;
}
.columns {
  width: 87%;
  border-collapse: collapse;
  font-size: 19px;
}
.columns td {
  height: 31px;
  padding: 0 6px;
  border-left: 1px dotted #a5a5a5;
  border-bottom: 1px dotted #a5a5a5;
}
.columns .mark {
  width: 29px;
  padding: 0;
}
.columns tr:nth-child(even) {
  background: #f3f2f0;
}
.columns .selected {
  outline: 2px dotted #222;
  outline-offset: -1px;
  background: #8ea9d4;
}
.columns .selected .mark {
  border-left-color: #fff;
}
.movers {
  display: flex;
  flex-direction: column;
  align-items: center;
  gap: 14px;
  width: 66px;
  margin-top: 9px;
  padding-top: 12px;
  border: 2px solid #c6bdb8;
  border-radius: 8px;
  background: linear-gradient(#ece2f0, #e6dbeb 40%, #d5c6dc);
}
.movers button {
  height: 31px;
}
.dialog-foot {
  display: flex;
  align-items: center;
  justify-content: center;
  gap: 9px;
  height: 57px;
  padding-left: 36px;
  border-top: 2px solid #39303d;
  background: linear-gradient(#e9e3ec, #d7c9de);
}
.dialog-foot button {
  display: flex;
  align-items: center;
  justify-content: center;
  gap: 6px;
  width: 154px;
  height: 40px;
  border: 1px solid #aea3b5;
  border-radius: 2px;
  background: linear-gradient(#f7effa, #efe4f3);
  font-size: 16px;
}
.dialog-foot .ok {
  border-width: 2px;
}
.pointer {
  position: absolute;
  left: 1278px;
  top: 307px;
}
.watermark {
  position: absolute;
  left: 15px;
  top: 914px;
  display: flex;
  align-items: center;
  gap: 4px;
  font-family: "Liberation Sans", sans-serif;
  font-size: 37px;
  font-weight: bold;
  color: rgba(255, 255, 255, 0.4);
  -webkit-text-stroke: 1px #a09ca4;
}
</style>
